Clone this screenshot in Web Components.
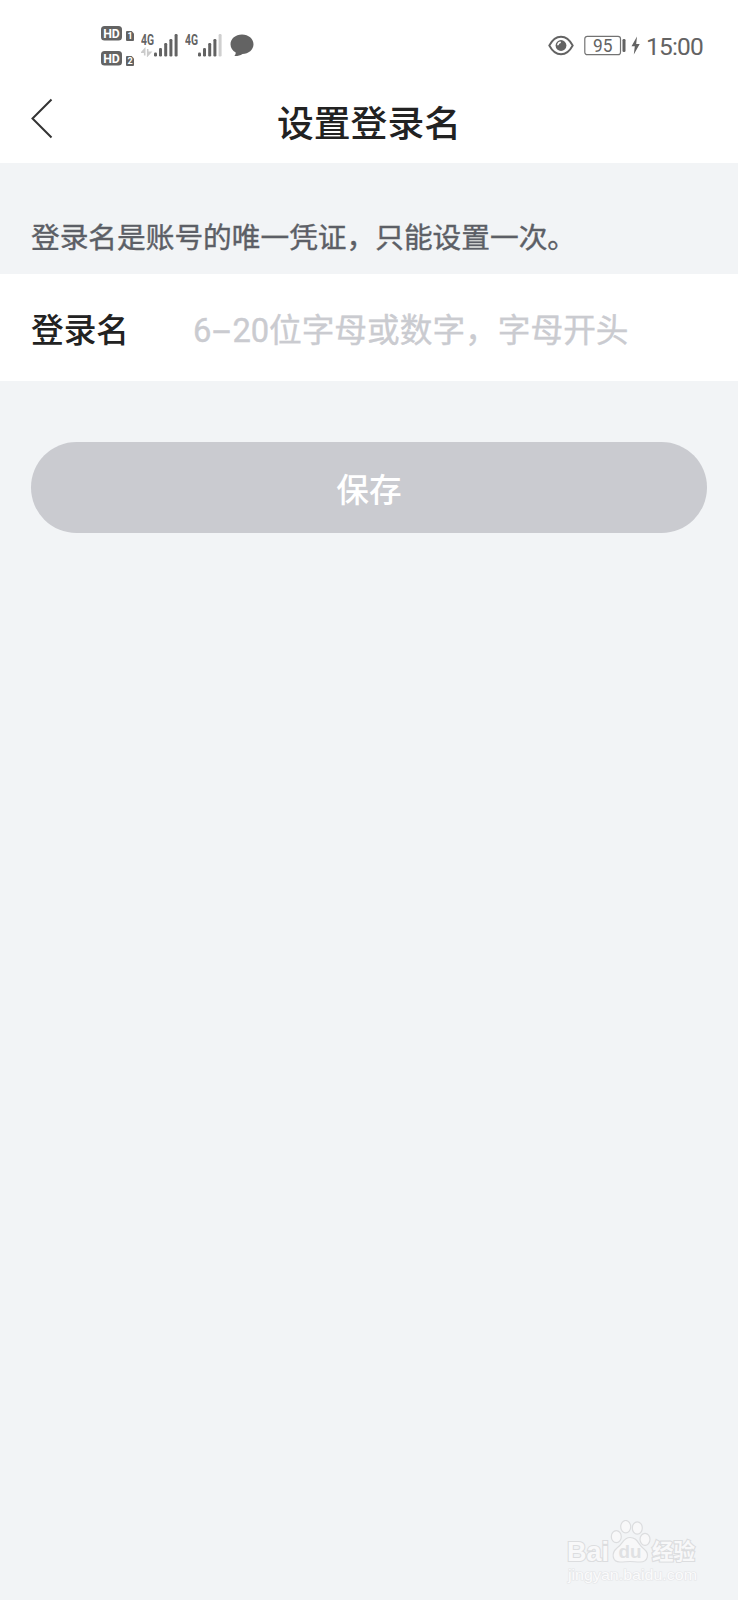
<!DOCTYPE html>
<html lang="zh-CN">
<head>
<meta charset="utf-8">
<title>设置登录名</title>
<style>
    html, body {
        margin: 0;
        padding: 0;
        background: #f2f4f6;
    }
    body {
        font-family: Roboto, "Noto Sans CJK SC", sans-serif;
    }
</style>
</head>
<body>
<login-name-page>
    <status-bar>15:00</status-bar>
    <nav-header>设置登录名</nav-header>
    <page-note>登录名是账号的唯一凭证，只能设置一次。</page-note>
    <form-row>
        <span slot="label">登录名</span>
        <hint-text>位字母或数字，字母开头</hint-text>
    </form-row>
    <save-button>保存</save-button>
    <water-mark></water-mark>
</login-name-page>

<script>
function define(name, html) {
    const template = document.createElement("template");
    template.innerHTML = html;
    window.customElements.define(name, class extends HTMLElement {
        constructor() {
            super();
            this.attachShadow({mode: "open"});
            this.shadowRoot.appendChild(template.content.cloneNode(true));
        }
    });
}

// hd-badge
define("hd-badge", /*html*/`
    <style>
        :host {
            display: flex;
            align-items: flex-end;
            gap: 4px;
            height: 15px;
            color: #fff;
            font-weight: bold;
            line-height: 1;
        }
        svg {
            display: block;
        }
        .sim {
            display: flex;
            align-items: center;
            justify-content: center;
            width: 8px;
            height: 10px;
            font-size: 9px;
            background: #636363;
            border-radius: 1px;
            clip-path: polygon(0 0, 70% 0, 100% 25%, 100% 100%, 0 100%);
        }
    </style>
    <svg width="21" height="15" viewBox="0 0 21 15">
        <rect width="21" height="14.6" rx="3.5" fill="#636363"/>
        <text x="2.2" y="12.2" font-size="13.5" font-weight="bold" textLength="16.6" lengthAdjust="spacingAndGlyphs" fill="#fff">HD</text>
    </svg>
    <span class="sim"><slot></slot></span>
`);

// signal-bars
define("signal-bars", /*html*/`
    <style>
        :host {
            display: block;
            width: 38px;
            height: 24px;
            --last: #636363;
        }
        :host([weak]) {
            --last: #cfcfcf;
        }
        :host([weak]) .data {
            display: none;
        }
        svg {
            display: block;
        }
    </style>
    <svg width="38" height="24" viewBox="0 0 38 24" fill="#636363">
        <text x="0" y="12" font-size="14" font-weight="bold" textLength="13" lengthAdjust="spacingAndGlyphs">4G</text>
        <path class="data" d="M3.700 22.500V16L.8 19.300H3.700M6.700 16V22.500L9.600 19.300H6.700" fill="none" stroke="#cbcbcb" stroke-width="1.600"/>
        <rect x="13" y="19.5" width="3" height="4" rx="1.2"/>
        <rect x="18" y="15" width="3" height="8.5" rx="1.2"/>
        <rect x="23.2" y="10" width="3" height="13.5" rx="1.2"/>
        <rect x="28.4" y="6" width="3" height="17.5" rx="1.2"/>
        <rect x="33.6" y="1" width="3" height="22.5" rx="1.2" style="fill: var(--last)"/>
    </svg>
`);

// status-bar
define("status-bar", /*html*/`
    <style>
        :host {
            display: flex;
            align-items: flex-start;
            box-sizing: border-box;
            height: 80px;
            padding: 26px 35px 0 101px;
            color: #636363;
        }
        svg {
            display: block;
        }
        .hd {
            display: flex;
            flex-direction: column;
            gap: 10px;
        }
        .first {
            margin: 7px 0 0 7px;
        }
        .second {
            margin: 7px 0 0 6px;
        }
        .chat {
            margin: 8px auto 0 7px;
        }
        .eye {
            margin: 9px 10px 0 0;
        }
        .battery {
            margin: 9px 5px 0 0;
        }
        .bolt {
            margin: 10px 6px 0 0;
        }
        .time {
            margin-top: 8px;
            font-size: 24.5px;
            line-height: 26px;
            letter-spacing: -0.8px;
        }
    </style>
    <div class="hd">
        <hd-badge>1</hd-badge>
        <hd-badge>2</hd-badge>
    </div>
    <signal-bars class="first"></signal-bars>
    <signal-bars class="second" weak></signal-bars>
    <svg class="chat" width="24" height="23" viewBox="0 0 24 23">
        <path d="M12 .5C18.500 .5 23.500 4.800 23.500 10.300S18.500 20 12.500 20C10 21.600 7.300 22.200 4.300 22C5.400 21 5.800 20 5.700 18.600C2.500 16.800 .5 13.800 .5 10.300C.5 4.800 5.500 .5 12 .5Z" fill="#636363"/>
    </svg>
    <svg class="eye" width="26" height="21" viewBox="0 0 26 21">
        <path d="M1.300 10.500C7.500-1.200 18.500-1.200 24.700 10.500C18.500 22.200 7.500 22.200 1.300 10.500Z" fill="none" stroke="#636363" stroke-width="1.900"/>
        <circle cx="13" cy="10.500" r="5.400" fill="#636363"/>
        <path d="M9.800 10.200A3.300 3.300 0 0 1 12.800 7.200" fill="none" stroke="#fff" stroke-width="1.500"/>
    </svg>
    <svg class="battery" width="42" height="21" viewBox="0 0 42 21">
        <rect x=".8" y="1.300" width="35.700" height="18.400" rx="2.500" fill="none" stroke="#737373" stroke-width="1.200"/>
        <text x="9" y="17.200" font-size="18.500" textLength="19.500" lengthAdjust="spacingAndGlyphs" fill="#636363">95</text>
        <rect x="38.500" y="4" width="3" height="13" rx="1.300" fill="#636363"/>
    </svg>
    <svg class="bolt" width="9" height="19" viewBox="0 0 9 19">
        <path d="M6 .5L.5 10.300H3.800L2.800 18.500L8.700 8H5.200Z" fill="#636363"/>
    </svg>
    <span class="time"><slot></slot></span>
`);

// nav-header
define("nav-header", /*html*/`
    <style>
        :host {
            display: grid;
            grid-template-columns: 60px 1fr 60px;
            height: 83px;
            color: #222;
            font-size: 36.8px;
            font-weight: 500;
            line-height: 54px;
            text-align: center;
        }
        svg {
            display: block;
            margin: 18px 0 0 30px;
        }
        .title {
            padding-top: 18px;
        }
    </style>
    <svg width="24" height="41" viewBox="0 0 24 41">
        <path d="M21.500 1.500L2.500 20.500L21.500 39.500" fill="none" stroke="#333" stroke-width="2"/>
    </svg>
    <span class="title"><slot></slot></span>
`);

// page-note
define("page-note", /*html*/`
    <style>
        :host {
            display: block;
            box-sizing: border-box;
            height: 111px;
            padding: 54px 31px 0;
            background: #f2f4f6;
            color: #5c5f66;
            font-size: 28.7px;
            line-height: 42px;
            white-space: nowrap;
            -webkit-text-stroke: 0.4px;
        }
    </style>
    <slot></slot>
`);

// hint-text
define("hint-text", /*html*/`
    <style>
        :host {
            display: flex;
            color: #cacbd0;
            white-space: nowrap;
            -webkit-text-stroke: 0.4px;
        }
        .range {
            width: 76px;
            padding-left: 1px;
        }
        .dash {
            display: inline-block;
            width: 21px;
            text-align: center;
            transform: scaleX(2);
        }
    </style>
    <span class="range">6<span class="dash">-</span>20</span><slot></slot>
`);

// form-row
define("form-row", /*html*/`
    <style>
        :host {
            display: grid;
            grid-template-columns: 161px 1fr;
            box-sizing: border-box;
            height: 107px;
            padding: 33px 31px 0;
            background: #fff;
            font-size: 32.7px;
            line-height: 48px;
        }
        .label {
            color: #222;
            font-weight: 500;
        }
    </style>
    <span class="label"><slot name="label"></slot></span>
    <slot></slot>
`);

// save-button
define("save-button", /*html*/`
    <style>
        :host {
            display: block;
            margin: 61px 31px 0;
        }
        button {
            display: block;
            width: 100%;
            height: 91px;
            padding: 7px 0 0;
            border: 0;
            border-radius: 46px;
            background: #cacbd0;
            color: #fff;
            font: inherit;
            font-size: 32.7px;
            font-weight: 500;
            line-height: 48px;
        }
    </style>
    <button type="button"><slot></slot></button>
`);

// water-mark
define("water-mark", /*html*/`
    <style>
        :host {
            position: absolute;
            right: 34px;
            bottom: 12px;
        }
        svg {
            display: block;
        }
    </style>
    <svg width="142" height="68" viewBox="0 0 142 68" fill="#f8f8f9" stroke="#dcdddf" stroke-width="1.200">
        <g font-family="Liberation Sans, sans-serif" font-weight="bold" paint-order="stroke" stroke-width="2.200">
            <text x="5" y="40.500" font-size="28" textLength="42" lengthAdjust="spacingAndGlyphs">Bai</text>
            <text x="90" y="39" font-size="21.500" font-family="Noto Sans CJK SC, sans-serif" textLength="43" lengthAdjust="spacingAndGlyphs">经验</text>
        </g>
        <ellipse cx="54.300" cy="16.700" rx="5" ry="6"/>
        <ellipse cx="63.700" cy="6.700" rx="5" ry="6.200"/>
        <ellipse cx="75.300" cy="8" rx="5" ry="6.200"/>
        <ellipse cx="83" cy="19.300" rx="5" ry="6"/>
        <path d="M68 17.500C76 17.500 76 25 82 29C88 34 86 42 78 42C73 42 72 41.500 68 41.500S63 42 58 42C50 42 49 33 55 28C61 24 61 17.500 68 17.500Z"/>
        <text x="56.500" y="38" font-family="Liberation Sans, sans-serif" font-size="18" font-weight="bold" fill="#e0e1e3" stroke="none" textLength="23" lengthAdjust="spacingAndGlyphs">du</text>
        <text x="6" y="59.500" font-family="Liberation Sans, sans-serif" font-size="15" fill="#fbfbfc" stroke="#e5e6e8" stroke-width="1.200" paint-order="stroke" textLength="129" lengthAdjust="spacingAndGlyphs">jingyan.baidu.com</text>
    </svg>
`);

// login-name-page
define("login-name-page", /*html*/`
    <style>
        :host {
            display: block;
            position: relative;
            width: 738px;
            height: 1600px;
            overflow: hidden;
            background: #f2f4f6;
        }
        ::slotted(status-bar), ::slotted(nav-header) {
            background: #fff;
        }
    </style>
    <slot></slot>
`);
</script>
</body>
</html>
